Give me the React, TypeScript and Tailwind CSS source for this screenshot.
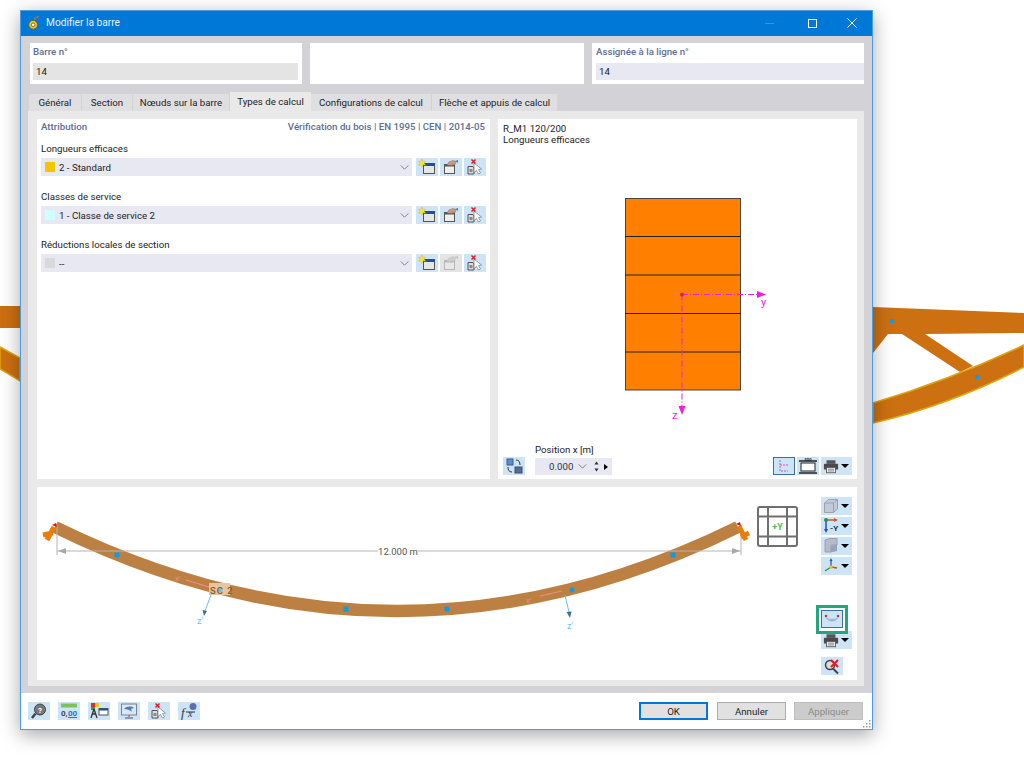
import React from 'react';

function NewIcon() {
  return (
    <svg viewBox="0 0 22 18" className="w-full h-full">
      <rect x="7.500" y="6" width="11" height="9.500" fill="#e6e6e6" stroke="#555" />
      <rect x="7" y="5" width="12" height="3" fill="#2b4a9a" />
      <path d="M6 1l1 2.500 2.700-.5-1.700 2 1.700 2.200-2.700-.5-1 2.600-1-2.600-2.700.5 1.700-2.200-1.700-2 2.700.5z" fill="#f7e62e" stroke="#c9b81c" strokeWidth="0.4" />
    </svg>
  );
}

function EditIcon({ off }: { off?: boolean }) {
  return (
    <svg viewBox="0 0 22 18" className={off ? 'w-full h-full opacity-30 grayscale' : 'w-full h-full'}>
      <rect x="4.500" y="7" width="10" height="8.500" fill="#eee" stroke="#555" />
      <rect x="4" y="6" width="11" height="2.500" fill="#555" />
      <path d="M7 7l2-3 4-1.500 3 1-1 3-4 1z" fill="#c79a7c" stroke="#8d6a55" strokeWidth="0.5" />
      <path d="M15 3l3-1v3z" fill="#3f7fc9" />
    </svg>
  );
}

function DeleteIcon() {
  return (
    <svg viewBox="0 0 22 18" className="w-full h-full">
      <path d="M4 8.500h5l1 1.500v6H4z" fill="#ddd" stroke="#555" />
      <rect x="5.500" y="11" width="3" height="3" fill="#888" />
      <path d="M10 5l7.500 6-3 .5 2 3.500-2 1-2-3.500-2.500 2z" fill="#fff" stroke="#777" strokeWidth="0.7" />
      <path d="M7.500 1.500l4 4M11.500 1.500l-4 4" stroke="#e01b24" strokeWidth="1.500" />
    </svg>
  );
}

function Printer() {
  return (
    <svg viewBox="0 0 18 16" className="w-[16px] h-[15px]">
      <rect x="4" y="1" width="10" height="4" fill="#555" />
      <rect x="1" y="5" width="16" height="6.500" rx="1" fill="#4a4a4a" />
      <rect x="4" y="9" width="10" height="6" fill="#f4f4f4" stroke="#555" />
      <path d="M5.500 11h7M5.500 13h7" stroke="#777" />
    </svg>
  );
}

function Caret() {
  return <span className="ml-auto mr-[3px] w-0 h-0 border-x-[4px] border-x-transparent border-t-[4px] border-t-black" />;
}

function Cube() {
  return (
    <svg viewBox="0 0 16 16" className="w-[16px] h-[16px]">
      <path d="M1.500 5l4-3.500h9V11l-4 3.500h-9z" fill="#c3cad7" stroke="#9aa2b2" />
      <path d="M1.500 5h9v9.500M10.500 5l4-3.500" fill="none" stroke="#9aa2b2" />
    </svg>
  );
}

function AxisView() {
  return (
    <svg viewBox="0 0 18 16" className="w-[18px] h-[16px]">
      <path d="M3 2h9" stroke="#c9572a" strokeWidth="1.500" />
      <path d="M11 0l4 2-4 2z" fill="#c9572a" />
      <path d="M3 2v10" stroke="#1f4fc4" strokeWidth="1.500" />
      <path d="M1 11l2 4 2-4z" fill="#1f4fc4" />
      <circle cx="3" cy="2" r="2" fill="#1f9a4b" />
      <text x="7" y="13" fontSize="8" fontWeight="700" fill="#333">-Y</text>
    </svg>
  );
}

function Layers() {
  return (
    <svg viewBox="0 0 16 16" className="w-[16px] h-[16px]">
      <path d="M2 2l5-1.500h7V7H8v7H2z" fill="#b4bccb" stroke="#98a0b0" />
      <path d="M8 8l6-1.500V13l-6 1.500z" fill="#97a3ba" />
    </svg>
  );
}

function Axes() {
  return (
    <svg viewBox="0 0 16 16" className="w-[16px] h-[16px]">
      <path d="M8 9V2" stroke="#2257c9" strokeWidth="1.300" />
      <path d="M6.500 3L8 0l1.500 3z" fill="#2257c9" />
      <path d="M8 9l6 1" stroke="#d0451f" strokeWidth="1.300" />
      <path d="M8 9l-6 4" stroke="#1f9a4b" strokeWidth="1.300" />
      <circle cx="8" cy="9" r="1.700" fill="#ecc21a" />
    </svg>
  );
}

function HelpIcon() {
  return (
    <svg viewBox="0 0 22 18" className="w-full h-full">
      <circle cx="12" cy="7.500" r="5.500" fill="#777" stroke="#444" />
      <path d="M7.500 11.500L4 16" stroke="#444" strokeWidth="2.500" />
      <text x="12" y="10.500" fontSize="8" fontWeight="700" textAnchor="middle" fill="#fff">?</text>
    </svg>
  );
}

function NumberIcon() {
  return (
    <svg viewBox="0 0 22 18" className="w-full h-full">
      <rect x="3" y="1.500" width="16" height="4" fill="#7cc35a" />
      <text x="3" y="14" fontSize="8" fontWeight="700" fill="#444">0,</text>
      <text x="10" y="14" fontSize="8" fontWeight="700" fill="#2f6fd0">00</text>
      <path d="M10 15.500h9" stroke="#2f6fd0" />
    </svg>
  );
}

function ColorIcon() {
  return (
    <svg viewBox="0 0 22 18" className="w-full h-full">
      <rect x="3" y="1" width="4" height="4" fill="#d8312a" />
      <rect x="7" y="1" width="4" height="4" fill="#e6c91f" />
      <rect x="3" y="5" width="4" height="3" fill="#2ea04c" />
      <path d="M6 7l-3 9M6 7l3 9M4 12h4" stroke="#333" strokeWidth="1.300" />
      <rect x="11" y="6.500" width="9" height="6.500" fill="#fff" stroke="#555" />
      <rect x="11" y="6.500" width="9" height="2" fill="#2b4a9a" />
    </svg>
  );
}

function ScreenIcon() {
  return (
    <svg viewBox="0 0 22 18" className="w-full h-full">
      <rect x="3.500" y="2" width="15" height="11" fill="#dbe6f2" stroke="#7b8290" />
      <path d="M6 7c3-3 7-3 10-1l-3 1 1 3c-2-2-5-3-8-3z" fill="#4d7fae" />
      <path d="M11 13v2M7 16h8" stroke="#7b8290" strokeWidth="1.500" />
    </svg>
  );
}

function FormulaIcon() {
  return (
    <svg viewBox="0 0 22 18" className="w-full h-full">
      <text x="3" y="15" fontSize="13" fontStyle="italic" fontFamily="Liberation Serif, serif" fill="#333">f</text>
      <text x="10" y="15" fontSize="10" fontStyle="italic" fontFamily="Liberation Serif, serif" fill="#333">x</text>
      <circle cx="15" cy="4.500" r="3.500" fill="#5b6fb0" />
      <path d="M8 10h9" stroke="#333" />
    </svg>
  );
}

function IconButton({ children, off }: { children: React.ReactNode; off?: boolean }) {
  return (
    <button className={off ? 'w-[22px] h-[18px] bg-[#e4e4e4] flex-none' : 'w-[22px] h-[18px] bg-[#cde4f7] flex-none'}>
      {children}
    </button>
  );
}

function DropButton({ children }: { children: React.ReactNode }) {
  return (
    <button className="w-[31px] h-[18px] bg-[#cde4f7] flex items-center pl-[2px]">
      {children}
      <Caret />
    </button>
  );
}

function Chevron() {
  return (
    <svg viewBox="0 0 10 6" className="w-[9px] h-[5px]">
      <path d="M.5.500L5 5 9.500.500" fill="none" stroke="#666" />
    </svg>
  );
}

const tabs = [
  { label: 'Général', w: 'w-[52px]' },
  { label: 'Section', w: 'w-[50px]' },
  { label: 'Nœuds sur la barre', w: 'w-[96px]' },
  { label: 'Types de calcul', w: 'w-[81px]', active: true },
  { label: 'Configurations de calcul', w: 'w-[120px]' },
  { label: 'Flèche et appuis de calcul', w: 'w-[125px]' },
];

const rows = [
  { label: 'Longueurs efficaces', value: '2 - Standard', color: 'bg-[#f5c400]' },
  { label: 'Classes de service', value: '1 - Classe de service 2', color: 'bg-[#ccffff]' },
  { label: 'Réductions locales de section', value: '--', color: 'bg-[#d9d9d9]', off: true },
];

function Background() {
  return (
    <svg viewBox="0 0 1024 768" className="absolute inset-0 w-[1024px] h-[768px]">
      <path d="M0 306L20 306V328H0z" fill="#cc7011" />
      <path d="M0 347L20 358V381L0 369z" fill="#cc7011" stroke="#dfa40c" strokeWidth="1.500" />
      <path d="M873 307L1024 313V333L925 334 973 366 960 372 902 334H888L873 353z" fill="#cc7011" />
      <path d="M873 403Q950 380 1024 345V367Q950 405 873 423z" fill="#cc7011" stroke="#dfa40c" strokeWidth="1.500" />
      <rect x="890" y="319" width="4" height="4" fill="#1d9ad6" />
      <rect x="975" y="375" width="4" height="4" fill="#1d9ad6" />
    </svg>
  );
}

function SectionDrawing() {
  return (
    <svg viewBox="498 150 359 280" className="w-[359px] h-[280px] flex-none">
      <rect x="625.500" y="198.500" width="115" height="191.500" fill="#ff8000" stroke="#444" />
      <path d="M625 236.500h116M625 275h116M625 313.500h116M625 352h116" stroke="#222" />
      <path d="M682 294.500h76M682 294.500v112" stroke="#f01fe0" strokeDasharray="6 2 1 2" />
      <path d="M757 291l9 3.500-9 3.500z" fill="#f01fe0" />
      <path d="M678.500 406l3.500 9 3.500-9z" fill="#f01fe0" />
      <circle cx="682" cy="294.500" r="2" fill="#e0202a" />
      <text x="761" y="306" fontSize="11" fill="#f01fe0">y</text>
      <text x="672" y="419" fontSize="11" fill="#f01fe0">z</text>
    </svg>
  );
}

function BeamDrawing() {
  const points = [[117, 555], [346, 609], [447, 609], [673, 555]];
  return (
    <svg viewBox="37 487 784 193" className="w-[784px] h-[193px] flex-none">
      <path d="M55 527Q397 695 738 527" fill="none" stroke="#bc8142" strokeWidth="12.500" />
      <path d="M57 525V555M741 525V555M57 551H741" stroke="#b5b5b5" fill="none" />
      <path d="M58 551l8-3v6zM740 551l-8-3v6z" fill="#a8a8a8" />
      <rect x="378" y="544" width="40" height="13" fill="#fff" />
      <text x="398" y="554.500" fontSize="9.500" textAnchor="middle" fill="#555">12.000 m</text>
      {points.map((p) => (
        <rect key={p[0]} x={p[0] - 2.500} y={p[1] - 2.500} width="5" height="5" fill="#0d9be8" />
      ))}
      <path d="M54 527L47 540M43 535L53 533" stroke="#e87d0a" strokeWidth="5" />
      <path d="M52 525l4-2 1 4z" fill="#e81010" />
      <path d="M739 526L746 540M741 537L749 533" stroke="#e87d0a" strokeWidth="5" />
      <path d="M736 524l4-2 1 4z" fill="#e81010" />
      <path d="M186 580L209 587M540 596L562 591" stroke="#ee8b8b" strokeWidth="1.200" />
      <text x="175" y="581" fontSize="8" fill="#ee8b8b">x'</text>
      <text x="526" y="603" fontSize="8" fill="#ee8b8b">x'</text>
      <rect x="209" y="583" width="21" height="12" fill="#e3c6a2" />
      <circle cx="219.500" cy="590" r="2.200" fill="#58c8f2" />
      <text x="210" y="593.500" fontSize="9.500" fontWeight="500" fill="#92551c" letterSpacing="1">SC 2</text>
      <circle cx="572" cy="590" r="2.500" fill="#0d9be8" />
      <path d="M211 595L205 611M565 595L569 612" stroke="#6ebcf2" />
      <path d="M202.500 610l1.500 6 3-5zM566.500 612l3.500 6 1.500-6.500z" fill="#3c6fa8" />
      <text x="197" y="624" fontSize="9" fill="#6ebcf2">z'</text>
      <text x="567" y="629" fontSize="9" fill="#6ebcf2">z'</text>
      <g fill="none" stroke="#6f6f6f" strokeWidth="2">
        <rect x="758" y="507" width="39" height="39" rx="2" />
        <path d="M768 507V546M787 507V546M758 516.500H797M758 536.500H797" />
      </g>
      <text x="777.500" y="530" fontSize="9" fontWeight="700" textAnchor="middle" fill="#5cb85c">+Y</text>
    </svg>
  );
}

export default function App() {
  return (
    <div className="relative w-[1024px] h-[768px] bg-white overflow-hidden font-['Roboto',sans-serif] text-[9.7px] leading-none text-[#222]">
      <Background />
      <div className="relative left-[20px] top-[10px] w-[853px] h-[720px] flex flex-col bg-[#d3d3d7] border border-[#4b9de2] shadow-[0_5px_18px_rgba(0,0,0,0.35)]">
        <div className="h-[25px] flex-none bg-[#0078d7] flex items-center text-white pb-[1px]">
          <svg viewBox="0 0 16 16" className="ml-[6px] w-[14px] h-[14px]">
            <circle cx="7" cy="10" r="5" fill="#e8c22a" stroke="#7a6414" />
            <circle cx="7" cy="10" r="2" fill="#fff" stroke="#7a6414" />
            <path d="M8 4c1-2 3-3 6-3" fill="none" stroke="#777" strokeWidth="2" />
          </svg>
          <span className="ml-[5px] text-[10.2px] text-[#e8f2fb]">Modifier la barre</span>
          <span className="ml-auto w-[9px] h-px bg-[#3a94dd] mr-[34px]" />
          <span className="w-[9px] h-[9px] border border-white mr-[30px]" />
          <svg viewBox="0 0 10 10" className="w-[10px] h-[10px] mr-[15px]">
            <path d="M.5.500l9 9M9.500.500l-9 9" stroke="#fff" />
          </svg>
        </div>
        <div className="flex-1 flex flex-col px-[7px] pt-[7px] min-h-0">
          <div className="flex gap-[8px] pl-[2px] h-[41px] flex-none">
            <div className="w-[272px] bg-white px-[3px] pt-[3px]">
              <div className="h-[17px] pt-[1px] font-medium text-[#5d6d96]">Barre n°</div>
              <div className="w-[265px] h-[17px] bg-[#e4e4e4] px-[3px] pt-[1px] flex items-center">14</div>
            </div>
            <div className="w-[274px] bg-white" />
            <div className="w-[272px] bg-white pl-[4px] pt-[3px]">
              <div className="h-[17px] pt-[1px] font-medium text-[#5d6d96]">Assignée à la ligne n°</div>
              <div className="h-[17px] bg-[#e8e8f3] px-[3px] pt-[1px] flex items-center">14</div>
            </div>
          </div>
          <div className="flex items-end h-[27px] flex-none pl-[1px]">
            {tabs.map((tab) => (
              <div
                key={tab.label}
                className={
                  tab.active
                    ? `${tab.w} h-[19px] pt-[1px] bg-[#e9e9e9] flex items-center justify-center`
                    : `${tab.w} h-[17px] pt-[1px] mr-[1px] bg-[#dfdfe2] flex items-center justify-center`
                }
              >
                {tab.label}
              </div>
            ))}
          </div>
          <div className="w-[836px] h-[575px] flex-none bg-[#e9e9e9] px-[9px] pt-[8px] flex flex-col gap-[8px]">
            <div className="flex gap-[8px] h-[360px] flex-none">
              <div className="w-[453px] bg-white px-[4px]">
                <div className="flex justify-between h-[15px] items-center mr-[1px] font-medium text-[#5d6d96] pt-[1px] mb-[7px]">
                  <span>Attribution</span>
                  <span>Vérification du bois | EN 1995 | CEN | 2014-05</span>
                </div>
                {rows.map((row) => (
                  <div key={row.label} className="h-[48px]">
                    <div className="h-[17px] pt-[3px]">{row.label}</div>
                    <div className="flex items-center gap-[2px] h-[18px]">
                      <div className="w-[371px] h-[18px] mr-[2px] bg-[#e8e8f3] flex items-center pl-[4px] pr-[3px]">
                        <span className={`w-[10px] h-[10px] mr-[4px] ${row.color}`} />
                        <span className="pt-[1px]">{row.value}</span>
                        <span className="ml-auto"><Chevron /></span>
                      </div>
                      <IconButton><NewIcon /></IconButton>
                      <IconButton off={row.off}><EditIcon off={row.off} /></IconButton>
                      <IconButton><DeleteIcon /></IconButton>
                    </div>
                  </div>
                ))}
              </div>
              <div className="w-[359px] bg-white flex flex-col">
                <div className="pl-[5px] pt-[4px] h-[31px] leading-[11px] flex-none">
                  <div>R_M1 120/200</div>
                  <div>Longueurs efficaces</div>
                </div>
                <SectionDrawing />
                <div className="flex items-end px-[5px] h-[30px] flex-none mt-auto mb-[4px]">
                  <IconButton>
                    <svg viewBox="0 0 22 18" className="w-full h-full">
                      <rect x="4" y="2" width="6" height="6" fill="#5a8ed0" stroke="#3b5d8f" />
                      <rect x="12" y="10" width="7" height="6" fill="#5a6c8c" stroke="#3b4d6f" />
                      <path d="M13 3c3 0 4 2 4 5M9 15c-3 0-4-2-4-5" fill="none" stroke="#333" />
                    </svg>
                  </IconButton>
                  <div className="ml-[10px] w-[77px]">
                    <div className="h-[13px] pb-[1px]">Position x [m]</div>
                    <div className="h-[17px] bg-[#e8e8f3] flex items-center pl-[14px]">
                      <span className="w-[26px] pt-[1px] text-[#333]">0.000</span>
                      <span className="ml-[3px]"><Chevron /></span>
                      <svg viewBox="0 0 6 12" className="ml-[7px] w-[5px] h-[11px]">
                        <path d="M3 0l2.500 3.500h-5zM3 12l2.500-3.500h-5z" fill="#333" />
                      </svg>
                      <span className="ml-[5px] w-0 h-0 border-y-[3.5px] border-y-transparent border-l-[4px] border-l-black" />
                    </div>
                  </div>
                  <div className="ml-auto flex gap-[2px]">
                    <button className="w-[22px] h-[18px] bg-[#cde4f7] border border-[#3a6ea5]">
                      <svg viewBox="0 0 20 16" className="w-full h-full">
                        <path d="M6 2v11h8M6 7h8" fill="none" stroke="#d352b5" strokeDasharray="2 1" />
                      </svg>
                    </button>
                    <IconButton>
                      <svg viewBox="0 0 22 18" className="w-full h-full">
                        <rect x="4" y="6" width="14" height="8" fill="#fff" stroke="#222" />
                        <path d="M2 4h18M2 16h18" stroke="#222" strokeWidth="1.500" />
                        <text x="11" y="4" fontSize="4" fontWeight="700" textAnchor="middle" fill="#222">500</text>
                      </svg>
                    </IconButton>
                    <DropButton><Printer /></DropButton>
                  </div>
                </div>
              </div>
            </div>
            <div className="w-[820px] h-[193px] flex-none bg-white flex">
              <BeamDrawing />
              <div className="relative w-[32px] flex-none pt-[10px] flex flex-col">
                <div className="flex flex-col gap-[2px]">
                  <DropButton><Cube /></DropButton>
                  <DropButton><AxisView /></DropButton>
                  <DropButton><Layers /></DropButton>
                  <DropButton><Axes /></DropButton>
                </div>
                <div className="mt-[35px] relative w-[22px] h-[18px] bg-[#cde4f7] border border-[#3a6ea5]">
                  <svg viewBox="0 0 20 16" className="w-full h-full">
                    <path d="M3 6Q10 15 17 6Q10 10 3 6z" fill="#9cb6d8" />
                    <circle cx="4" cy="5" r="1.200" fill="#e0202a" />
                    <circle cx="16" cy="5" r="1.200" fill="#e0202a" />
                  </svg>
                  <div className="absolute -left-[6px] -top-[6px] w-[32px] h-[29px] border-[3px] border-[#25a57d]" />
                </div>
                <div className="mt-[3px]">
                  <DropButton><Printer /></DropButton>
                </div>
                <div className="mt-[8px]">
                  <IconButton>
                    <svg viewBox="0 0 22 18" className="w-full h-full">
                      <circle cx="9" cy="8" r="4.500" fill="#ddd" stroke="#444" strokeWidth="1.500" />
                      <path d="M12 11.500l5 5" stroke="#444" strokeWidth="2" />
                      <path d="M10 3l7 7M17 3l-7 7" stroke="#e01b24" strokeWidth="2" />
                    </svg>
                  </IconButton>
                </div>
              </div>
            </div>
          </div>
        </div>
        <div className="relative h-[36px] flex-none bg-white flex items-center pl-[7px] pr-[9px]">
          <div className="flex gap-[8px]">
            <IconButton><HelpIcon /></IconButton>
            <IconButton><NumberIcon /></IconButton>
            <IconButton><ColorIcon /></IconButton>
            <IconButton><ScreenIcon /></IconButton>
            <IconButton><DeleteIcon /></IconButton>
            <IconButton><FormulaIcon /></IconButton>
          </div>
          <div className="ml-auto flex">
            <button className="w-[69px] h-[18px] pt-[1px] mr-[9px] bg-[#e1e1e1] border-2 border-[#0078d7]">OK</button>
            <button className="w-[69px] h-[18px] pt-[1px] mr-[8px] bg-[#e1e1e1] border border-[#adadad]">Annuler</button>
            <button className="w-[69px] h-[18px] pt-[1px] bg-[#cccccc] border border-[#bfbfbf] text-[#8a8a8a]">Appliquer</button>
          </div>
          <svg viewBox="0 0 9 9" className="absolute right-[1px] bottom-[1px] w-[9px] h-[9px]">
            <path d="M7 1h1.500v1.500H7zM4 4h1.500v1.500H4zM7 4h1.500v1.500H7zM1 7h1.500v1.500H1zM4 7h1.500v1.500H4zM7 7h1.500v1.500H7z" fill="#999" />
          </svg>
        </div>
      </div>
    </div>
  );
}
